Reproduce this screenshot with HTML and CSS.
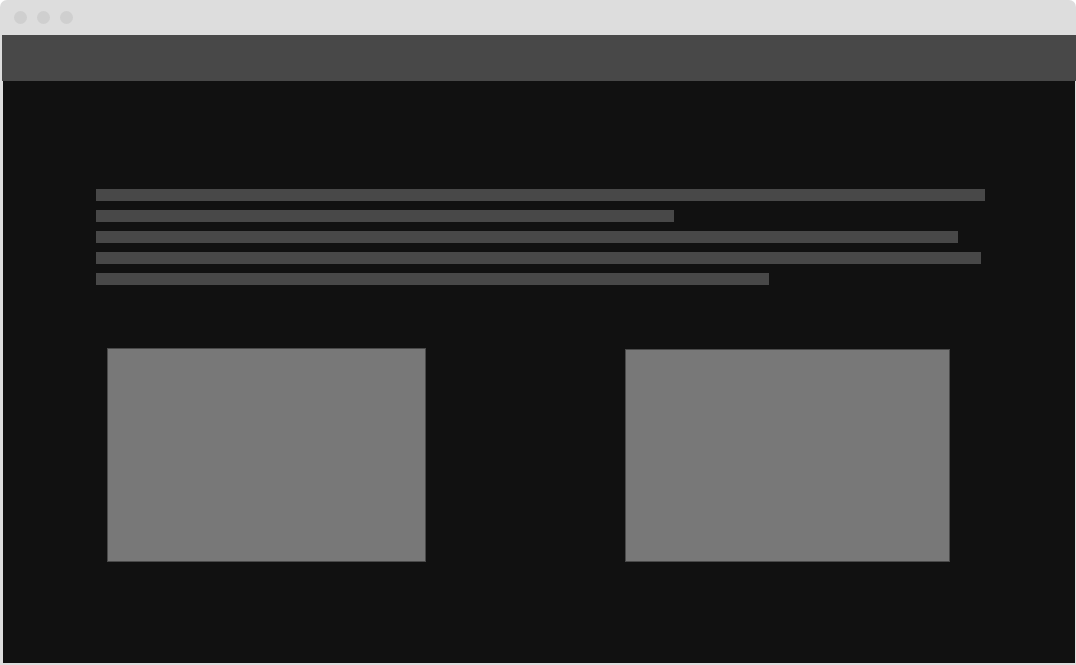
FILE: index.html
```html
<!DOCTYPE html>
<html>
<head>
<meta charset="utf-8">
<link rel="stylesheet" href="styles.css">
</head>
<body>
<div class="window">
  <div class="titlebar">
    <span class="dot"></span><span class="dot"></span><span class="dot"></span>
  </div>
  <div class="header"></div>
  <div class="content">
    <div class="lines">
      <div class="line" style="width:889px"></div>
      <div class="line" style="width:578px"></div>
      <div class="line" style="width:862px"></div>
      <div class="line" style="width:885px"></div>
      <div class="line" style="width:673px"></div>
    </div>
    <div class="boxes">
      <div class="box box-a"></div>
      <div class="box box-b"></div>
    </div>
  </div>
</div>
</body>
</html>
```
FILE: styles.css
```css
html, body {
  margin: 0;
  padding: 0;
  background: #ffffff;
}
.window {
  width: 1076px;
  height: 665px;
  box-sizing: border-box;
  background: #dddddd;
  border-radius: 7px 7px 0 0;
  padding: 0 1px 2px 2px;
  display: flex;
  flex-direction: column;
  overflow: hidden;
}
.titlebar {
  height: 35px;
  flex: none;
  display: flex;
  align-items: center;
  gap: 10px;
  padding-left: 12px;
}
.dot {
  width: 13px;
  height: 13px;
  border-radius: 50%;
  background: #cfcfcf;
}
.header {
  height: 46px;
  flex: none;
  background: #484848;
  margin-right: -1px;
}
.content {
  flex: 1;
  background: #111111;
  margin-left: 1px;
  padding-top: 108px;
}
.lines {
  display: flex;
  flex-direction: column;
  gap: 9px;
  padding-left: 93px;
}
.line {
  height: 12px;
  background: #484848;
}
.boxes {
  display: flex;
  align-items: flex-start;
  margin-top: 63px;
  padding-left: 104px;
}
.box {
  background: #787878;
  box-sizing: border-box;
  border: 1px solid #4a4a4a;
}
.box-a {
  width: 319px;
  height: 214px;
}
.box-b {
  width: 325px;
  height: 213px;
  margin-top: 1px;
  margin-left: 199px;
}
```
